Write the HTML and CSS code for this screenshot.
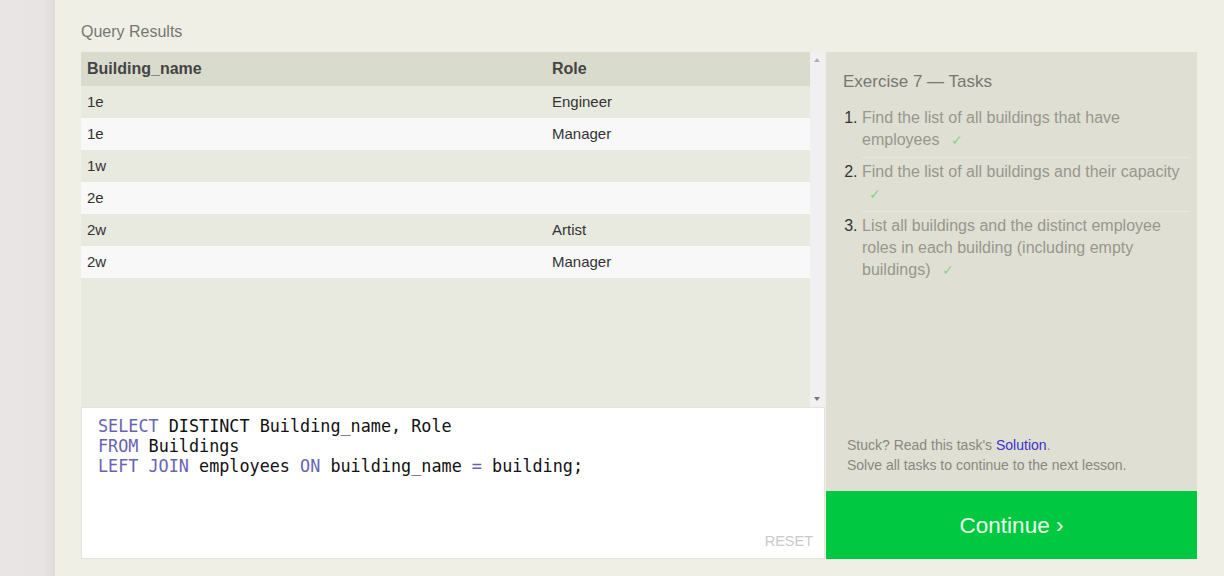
FILE: index.html
```html
<!DOCTYPE html>
<html>
<head>
<meta charset="utf-8">
<link rel="stylesheet" href="styles.css">
</head>
<body>
<div class="page">
  <div class="sidebar"></div>
  <main class="main">
    <h2 class="section-title">Query Results</h2>
    <div class="workspace">
      <div class="left-col">
        <div class="results">
          <div class="table-wrap">
            <div class="row head"><div class="cell">Building_name</div><div class="cell">Role</div></div>
            <div class="row odd"><div class="cell">1e</div><div class="cell">Engineer</div></div>
            <div class="row even"><div class="cell">1e</div><div class="cell">Manager</div></div>
            <div class="row odd"><div class="cell">1w</div><div class="cell"></div></div>
            <div class="row even"><div class="cell">2e</div><div class="cell"></div></div>
            <div class="row odd"><div class="cell">2w</div><div class="cell">Artist</div></div>
            <div class="row even"><div class="cell">2w</div><div class="cell">Manager</div></div>
          </div>
          <div class="scrollbar">
            <span class="arrow up"></span>
            <span class="arrow down"></span>
          </div>
        </div>
        <div class="editor">
          <pre class="code"><span class="kw">SELECT</span> DISTINCT Building_name, Role
<span class="kw">FROM</span> Buildings
<span class="kw">LEFT JOIN</span> employees <span class="kw">ON</span> building_name <span class="kw">=</span> building;</pre>
          <div class="reset">RESET</div>
        </div>
      </div>
      <div class="right-col">
        <div class="tasks">
          <div class="tasks-top">
            <h3 class="tasks-title">Exercise 7 — Tasks</h3>
            <ol class="task-list">
              <li><span class="task-text">Find the list of all buildings that have employees </span><span class="check">✓</span></li>
              <li><span class="task-text">Find the list of all buildings and their capacity </span><span class="check">✓</span></li>
              <li class="last"><span class="task-text">List all buildings and the distinct employee roles in each building (including empty buildings) </span><span class="check">✓</span></li>
            </ol>
          </div>
          <div class="tasks-foot">
            <div>Stuck? Read this task's <a class="link">Solution</a>.</div>
            <div>Solve all tasks to continue to the next lesson.</div>
          </div>
        </div>
        <div class="continue">Continue ›</div>
      </div>
    </div>
  </main>
</div>
</body>
</html>
```
FILE: styles.css
```css
* { box-sizing: border-box; }
html, body { margin: 0; padding: 0; }
body {
  font-family: "Liberation Sans", Arial, sans-serif;
  background: #efefe5;
  width: 1224px;
  height: 576px;
  overflow: hidden;
}
.page {
  display: flex;
  height: 576px;
}
.sidebar {
  width: 55px;
  flex: none;
  background: linear-gradient(to right, #e9e5e4 0, #e8e4e3 80%, #ddd9d7 100%);
}
.main {
  flex: 1;
  padding: 22px 27px 0 26px;
  background: #efefe5;
}
.section-title {
  margin: 0 0 11px 0;
  font-size: 16px;
  line-height: 19px;
  font-weight: normal;
  color: #777772;
}
.workspace {
  display: flex;
  gap: 1px;
}
.left-col {
  width: 744px;
  display: flex;
  flex-direction: column;
}
.results {
  height: 355px;
  display: flex;
  background: #e9eadf;
}
.table-wrap {
  flex: 1;
}
.row {
  display: grid;
  grid-template-columns: 465px 1fr;
  height: 32px;
  align-items: center;
  font-size: 15px;
  color: #333;
}
.row .cell { padding-left: 6px; padding-bottom: 1px; }
.row.head {
  height: 34px;
  background: #d9dbcd;
  font-weight: bold;
  font-size: 16px;
  color: #444;
}
.row.odd { background: #e9eadf; }
.row.even { background: #f8f8f8; }
.scrollbar {
  width: 15px;
  background: #f0f0f2;
  position: relative;
}
.arrow {
  position: absolute;
  left: 4px;
  width: 0;
  height: 0;
  border-left: 3.5px solid transparent;
  border-right: 3.5px solid transparent;
}
.arrow.up { top: 6px; border-bottom: 4px solid #b0b0b0; }
.arrow.down { bottom: 6px; border-top: 4px solid #777; }
.editor {
  height: 152px;
  background: #fff;
  border: 1px solid #e3e3da;
  display: flex;
  flex-direction: column;
  justify-content: space-between;
  padding: 8px 11px 9px 16px;
}
.code {
  margin: 0;
  font-family: "DejaVu Sans Mono", monospace;
  font-size: 16.8px;
  line-height: 20px;
  color: #111;
}
.kw { color: #6a62b3; }
.reset {
  align-self: flex-end;
  font-size: 14.5px;
  color: #c9c9c9;
}
.right-col {
  width: 371px;
  display: flex;
  flex-direction: column;
}
.tasks {
  height: 439px;
  background: #dfe0d3;
  display: flex;
  flex-direction: column;
  justify-content: space-between;
  padding: 20px 7px 16px 17px;
}
.tasks-title {
  margin: 0 0 15px 0;
  font-size: 17px;
  line-height: 20px;
  font-weight: normal;
  color: #777772;
}
.task-list {
  margin: 0;
  padding: 0 0 0 19px;
  font-size: 16px;
  line-height: 22px;
  color: #333;
}
.task-list li {
  padding: 0 0 6px 0;
  border-bottom: 1px solid #e8e9de;
  margin-bottom: 3px;
}
.task-list li.last { border-bottom: none; }
.task-text { color: #97978e; }
.check {
  display: inline-block;
  margin-left: 7px;
  font-size: 14px;
  line-height: 16px;
  color: #88d18f;
}
.tasks-foot {
  padding-left: 4px;
  font-size: 14px;
  line-height: 20px;
  color: #888880;
}
.link { color: #3b2fd0; }
.continue {
  height: 68px;
  background: #00c941;
  color: #eaffea;
  font-size: 22.5px;
  padding-top: 2px;
  display: flex;
  align-items: center;
  justify-content: center;
}
```
